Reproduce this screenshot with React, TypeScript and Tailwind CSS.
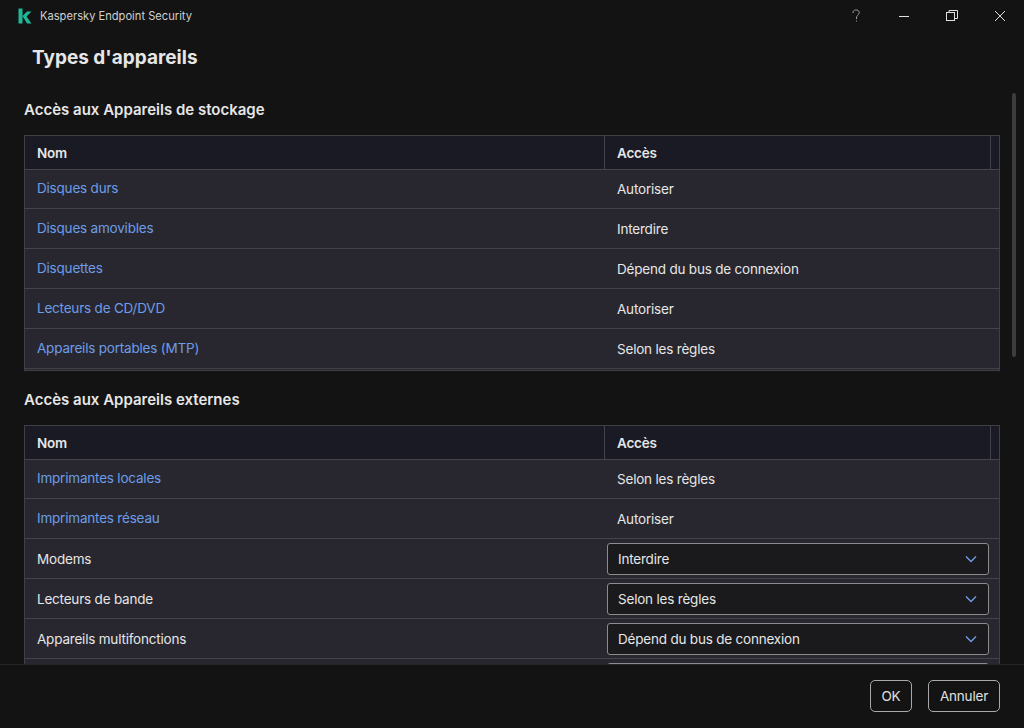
import React from "react";

type Row = { name: string; access: string; link?: boolean; select?: boolean };

const storage: Row[] = [
  { name: "Disques durs", access: "Autoriser", link: true },
  { name: "Disques amovibles", access: "Interdire", link: true },
  { name: "Disquettes", access: "Dépend du bus de connexion", link: true },
  { name: "Lecteurs de CD/DVD", access: "Autoriser", link: true },
  { name: "Appareils portables (MTP)", access: "Selon les règles", link: true },
];

const external: Row[] = [
  { name: "Imprimantes locales", access: "Selon les règles", link: true },
  { name: "Imprimantes réseau", access: "Autoriser", link: true },
  { name: "Modems", access: "Interdire", select: true },
  { name: "Lecteurs de bande", access: "Selon les règles", select: true },
  { name: "Appareils multifonctions", access: "Dépend du bus de connexion", select: true },
  { name: "", access: "", select: true },
];

function Select({ value }: { value: string }) {
  return (
    <div className="flex h-[32px] w-[382px] items-center justify-between rounded-[3px] border border-[#8c8c8e] bg-[#1a1a1c] pl-[10px] pr-[11px] text-[#e6e6e6]">
      <span className="mb-[1px]">{value}</span>
      <svg width="12" height="8" viewBox="0 0 12 8" fill="none" stroke="#6d9de8" strokeWidth="1.4">
        <path d="M1 1.5 L6 6.5 L11 1.5" />
      </svg>
    </div>
  );
}

function TableRow({ row, first }: { row: Row; first: boolean }) {
  return (
    <div className={`flex shrink-0 border-b border-[#434349] ${first ? "h-[39px]" : "h-[40px]"}`}>
      <div className={`flex w-[580px] items-center pl-[12px] ${row.link ? (first ? "pb-[2px] text-[#6d9de8]" : "pb-[1px] text-[#6d9de8]") : "pt-[1px] text-[#e6e6e6]"}`}>
        {row.name}
      </div>
      {row.select ? (
        <div className="flex flex-1 items-center pl-[2px] pt-[1px]">
          <Select value={row.access} />
        </div>
      ) : (
        <div className={`flex flex-1 items-center pl-[12px] text-[#e6e6e6] ${first ? "" : "pt-[1px]"}`}>{row.access}</div>
      )}
    </div>
  );
}

function DeviceTable({ rows, clipped }: { rows: Row[]; clipped?: boolean }) {
  return (
    <div className={`w-[976px] border border-[#3f3f44] bg-[#28272f] ${clipped ? "border-b-0" : "pb-[1px]"}`}>
      <div className="flex h-[34px] border-b border-[#434349] bg-[#1a1a24] font-semibold text-[#e6e6e6]">
        <div className="flex w-[580px] items-center border-r border-[#434349] pl-[12px] pt-[1px]">Nom</div>
        <div className="flex w-[386px] items-center border-r border-[#434349] pl-[12px] pt-[1px]">Accès</div>
      </div>
      {rows.map((r, i) => (
        <TableRow key={i} row={r} first={i === 0} />
      ))}
    </div>
  );
}

export default function App() {
  return (
    <div
      className="flex h-[728px] w-[1024px] flex-col overflow-hidden bg-[#131313] text-[13.5px] leading-[20px] tracking-[-0.2px]"
      style={{ fontFamily: "Inter, 'Liberation Sans', sans-serif" }}
    >
      <div className="flex h-[32px] shrink-0 items-center pl-[18px]">
        <svg width="14" height="16" viewBox="0 0 14 16" className="mr-[8px]">
          <path d="M0.500 0.500 H4.500 V15.500 H0.500 Z M4.500 8 L9 3.500 H13.500 L8.500 8.500 L13.500 15.500 H9 Z" fill="#1fb597" />
        </svg>
        <span className="text-[11.15px] tracking-normal text-[#d0d0d0]">Kaspersky Endpoint Security</span>
        <div className="ml-auto flex items-center">
          <svg width="48" height="32" viewBox="0 0 48 32" fill="none" stroke="#a0a0a0" strokeWidth="1">
            <path d="M21 13 C21 10 23 10 24.500 10 C27 10 27.500 12 27 13.500 C26.500 15 24.500 15.500 24.500 18 V19" />
            <path d="M24.500 20.500 V21.500" />
          </svg>
          <svg width="48" height="32" viewBox="0 0 48 32" fill="none" stroke="#e0e0e0" strokeWidth="1">
            <path d="M19 16.500 H29" />
          </svg>
          <svg width="48" height="32" viewBox="0 0 48 32" fill="none" stroke="#e0e0e0" strokeWidth="1">
            <rect x="18.500" y="12.500" width="8" height="8" />
            <path d="M21 12 V10.500 H29.500 V18.500 H27" />
          </svg>
          <svg width="48" height="32" viewBox="0 0 48 32" fill="none" stroke="#e0e0e0" strokeWidth="1">
            <path d="M19 11 L29 21 M29 11 L19 21" />
          </svg>
        </div>
      </div>

      <div className="relative min-h-0 flex-1 overflow-hidden pl-[24px]">
        <h1 className="ml-[8px] mt-[12px] h-[28px] text-[19px] font-bold leading-[28px] tracking-normal text-[#e6e6e6]">
          Types d'appareils
        </h1>
        <h2 className="mt-[26px] h-[24px] text-[15px] font-semibold leading-[24px] tracking-normal text-[#e6e6e6]">
          Accès aux Appareils de stockage
        </h2>
        <div className="mt-[13px]">
          <DeviceTable rows={storage} />
        </div>
        <h2 className="mt-[17px] h-[24px] text-[15px] font-semibold leading-[24px] tracking-normal text-[#e6e6e6]">
          Accès aux Appareils externes
        </h2>
        <div className="mt-[13px]">
          <DeviceTable rows={external} clipped />
        </div>
        <div className="absolute left-[1012px] top-[61px] h-[264px] w-[4px] rounded-[2px] bg-[#3d3d40]" />
      </div>

      <div className="flex h-[64px] shrink-0 items-center justify-end gap-[16px] border-t border-[#262626] pr-[24px] pb-[1px] text-[#e0e0e0]">
        <div className="flex h-[32px] w-[42px] items-center justify-center rounded-[5px] border border-[#a8a8a8]">OK</div>
        <div className="flex h-[32px] w-[72px] items-center justify-center rounded-[5px] border border-[#a8a8a8]">Annuler</div>
      </div>
    </div>
  );
}
